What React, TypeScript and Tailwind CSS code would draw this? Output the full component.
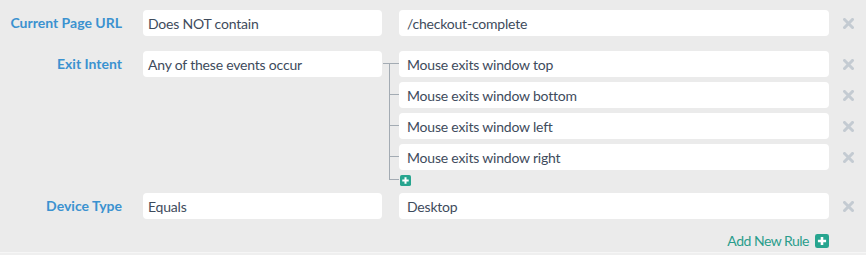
import React from 'react';

const font = { fontFamily: 'Lato, "Open Sans", sans-serif' };

function RemoveIcon() {
  return (
    <div className="flex w-[37px] shrink-0 items-center justify-center">
      <svg width="11" height="11" viewBox="0 0 11 11" className="ml-[2px]">
        <path d="M1.5 1.5 L9.5 9.5 M9.5 1.5 L1.5 9.5" stroke="#c4cbd2" strokeWidth="3" strokeLinecap="square" />
      </svg>
    </div>
  );
}

function PlusBox({ size = 11 }: { size?: number }) {
  return (
    <svg width={size} height={size} viewBox="0 0 12 12">
      <rect x="0" y="0" width="12" height="12" rx="2" fill="#27a58f" />
      <path d="M6 2.5 V9.5 M2.5 6 H9.5" stroke="#fff" strokeWidth="2.2" />
    </svg>
  );
}

function Field({ text, pad = 'pl-[5px]' }: { text: string; pad?: string }) {
  return (
    <div className={`flex h-[26px] items-center rounded-[4px] bg-white ${pad} pt-px text-[14px] tracking-[-0.2px] text-[#3e4b5c]`}>
      {text}
    </div>
  );
}

function Label({ text }: { text: string }) {
  return (
    <div className="w-[122px] shrink-0 text-right text-[14px] font-bold leading-[26px] text-[#3b92d0]">{text}</div>
  );
}

const events = ['Mouse exits window top', 'Mouse exits window bottom', 'Mouse exits window left', 'Mouse exits window right'];

export default function App() {
  return (
    <div style={font} className="w-[866px] bg-[#ebebeb]">
      <div className="flex h-[252px] flex-col pt-[10px]">
        <div className="flex items-start">
          <Label text="Current Page URL" />
          <div className="ml-[21px] w-[239px] shrink-0">
            <Field text="Does NOT contain" />
          </div>
          <div className="w-[17px] shrink-0" />
          <div className="w-[430px] shrink-0">
            <Field text="/checkout-complete" pad="pl-[8px]" />
          </div>
          <div className="h-[26px] flex"><RemoveIcon /></div>
        </div>

        <div className="mt-[15px] flex items-start">
          <Label text="Exit Intent" />
          <div className="ml-[21px] w-[239px] shrink-0">
            <Field text="Any of these events occur" />
          </div>
          <div className="relative h-[134px] w-[17px] shrink-0">
            <div className="absolute left-px top-[12px] h-px w-[16px] bg-[#a3abb3]" />
            <div className="absolute left-[7px] top-[12px] h-[116px] w-px bg-[#a3abb3]" />
            <div className="absolute left-[7px] top-[43px] h-px w-[10px] bg-[#a3abb3]" />
            <div className="absolute left-[7px] top-[74px] h-px w-[10px] bg-[#a3abb3]" />
            <div className="absolute left-[7px] top-[105px] h-px w-[10px] bg-[#a3abb3]" />
            <div className="absolute left-[7px] top-[128px] h-px w-[10px] bg-[#a3abb3]" />
          </div>
          <div className="flex flex-col">
            {events.map((e) => (
              <div key={e} className="mb-[5px] flex">
                <div className="w-[430px] shrink-0">
                  <Field text={e} pad="pl-[8px]" />
                </div>
                <RemoveIcon />
              </div>
            ))}
            <div className="ml-px">
              <PlusBox />
            </div>
          </div>
        </div>

        <div className="mt-[7px] flex items-start">
          <Label text="Device Type" />
          <div className="ml-[21px] w-[239px] shrink-0">
            <Field text="Equals" />
          </div>
          <div className="w-[17px] shrink-0" />
          <div className="w-[430px] shrink-0">
            <Field text="Desktop" pad="pl-[8px]" />
          </div>
          <div className="h-[26px] flex"><RemoveIcon /></div>
        </div>

        <div className="mt-[11px] flex w-[829px] items-center justify-end gap-[6px]">
          <span className="text-[14px] tracking-[-0.5px] text-[#2a9d8c]">Add New Rule</span>
          <PlusBox size={14} />
        </div>
      </div>
      <div className="h-[3px] border-t border-[#f6f6f6] bg-[#efefef]" />
    </div>
  );
}
